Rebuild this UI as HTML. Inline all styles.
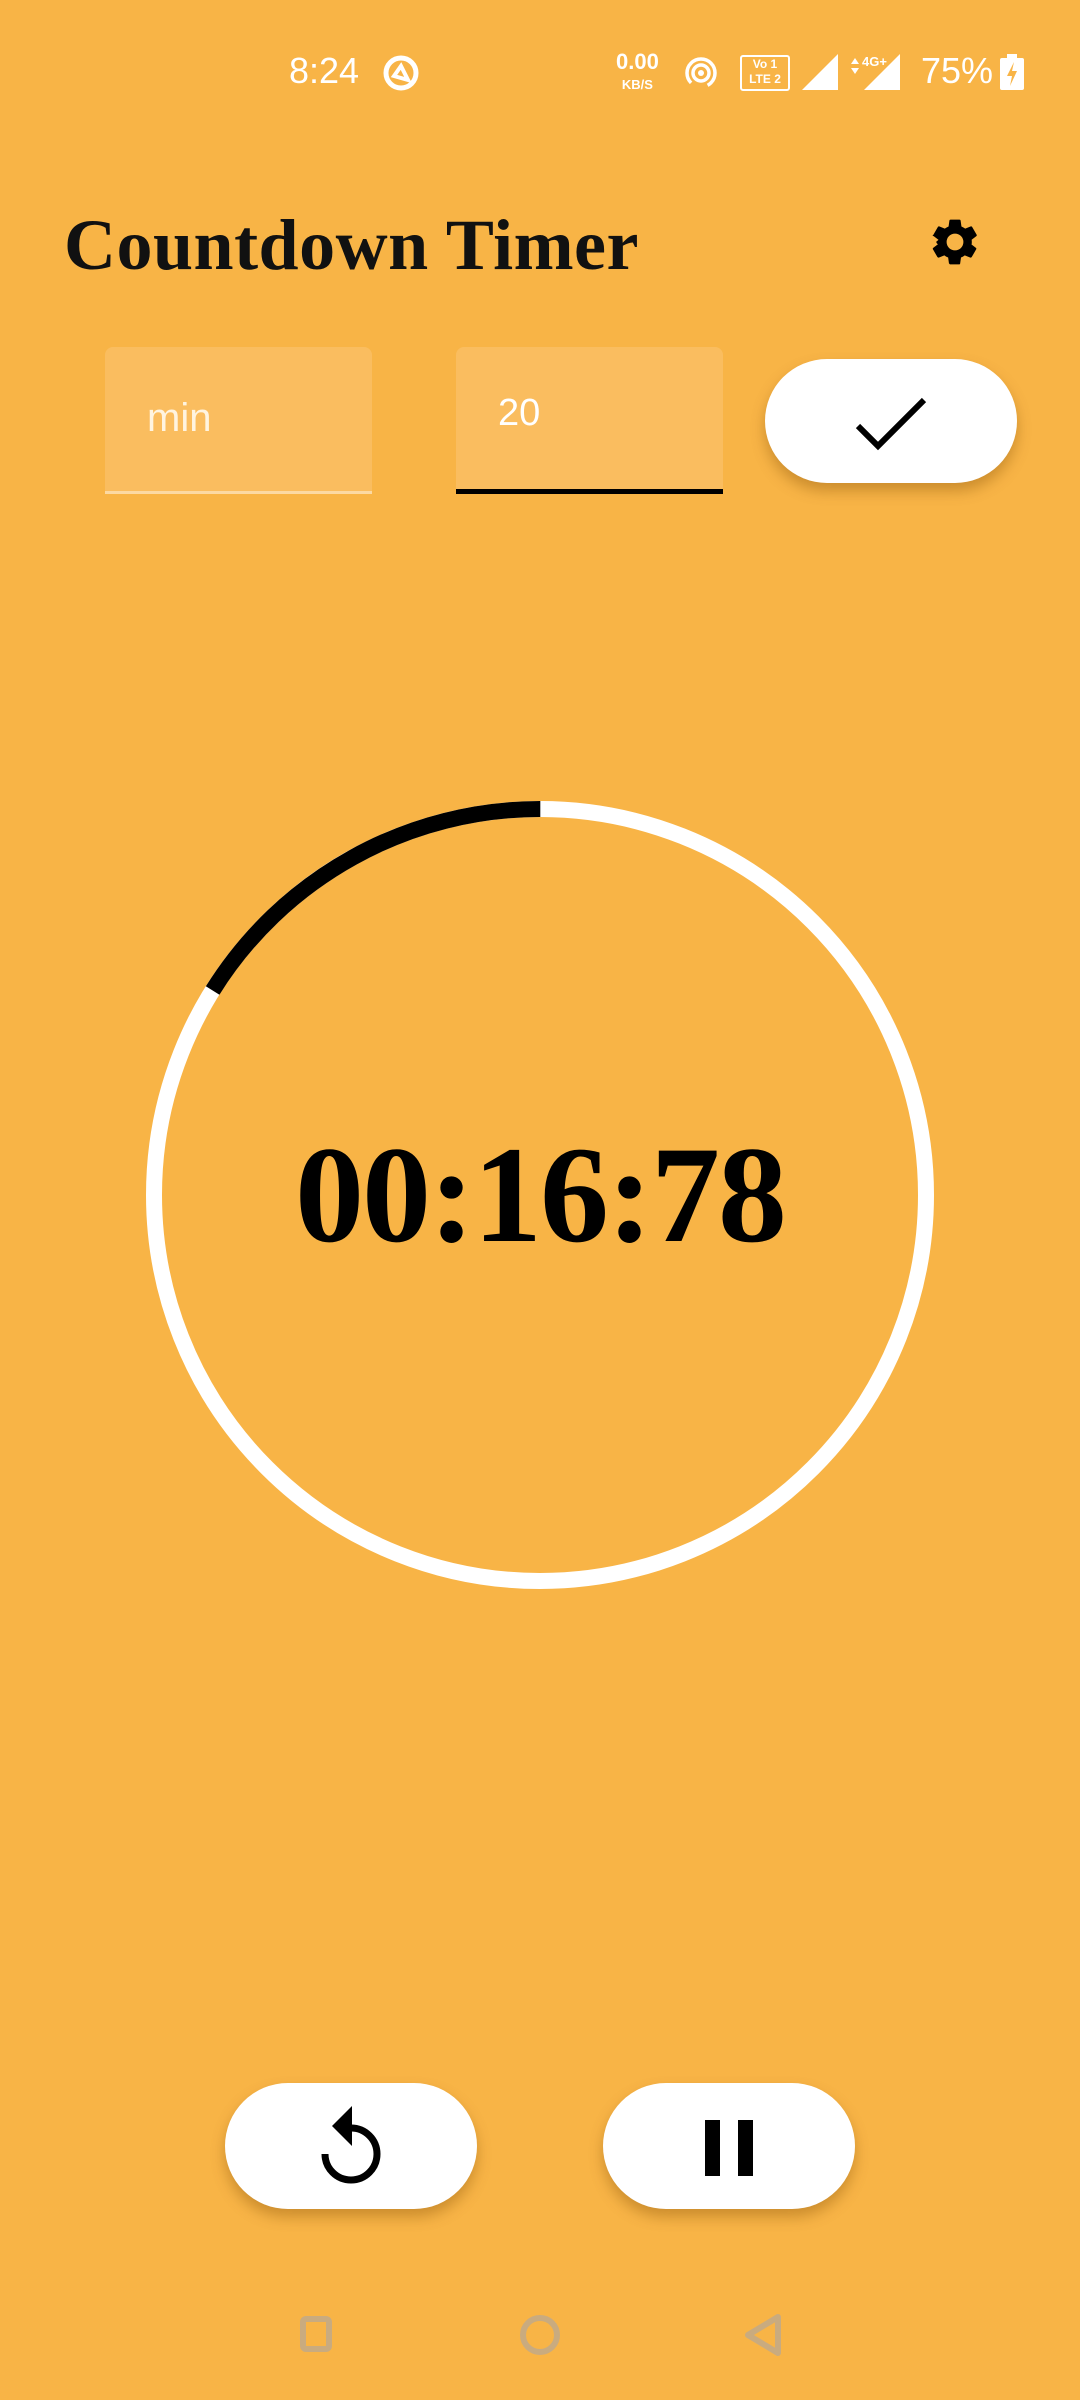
<!DOCTYPE html>
<html><head><meta charset="utf-8"><style>
html,body{margin:0;padding:0}
body{width:1080px;height:2400px;background:#F8B446;position:relative;overflow:hidden;font-family:"Liberation Sans",sans-serif}
.abs{position:absolute}
.st{color:#fff;font-size:36px}
.title{left:64px;top:200px;font-family:"Liberation Serif",serif;font-weight:bold;font-size:72px;color:#111;line-height:90px;letter-spacing:0.5px}
.field{background:#FABD5F;border-radius:8px 8px 0 0;top:347px;height:147px;width:267px}
.pill{background:#fff;border-radius:64px;box-shadow:0 8px 14px rgba(120,70,0,0.35)}
</style></head><body>
<div class="abs st" style="left:289px;top:50px">8:24</div>
<svg class="abs" style="left:382px;top:54px" width="38" height="38" viewBox="0 0 38 38"><circle cx="19" cy="19" r="15" fill="none" stroke="#fff" stroke-width="5"/><path d="M12 22 L19 12 L26 26 Z" fill="none" stroke="#fff" stroke-width="4"/></svg>
<div class="abs" style="left:616px;top:52px;color:#fff;font-weight:bold;font-size:22px;line-height:20px;text-align:center">0.00<br><span style="font-size:13px">KB/S</span></div>
<svg class="abs" style="left:684px;top:56px" width="34" height="34" viewBox="0 0 34 34"><circle cx="17" cy="17" r="14" fill="none" stroke="#fff" stroke-width="3.5" stroke-dasharray="70 18" transform="rotate(135 17 17)"/><circle cx="17" cy="17" r="8" fill="none" stroke="#fff" stroke-width="3.5"/><circle cx="17" cy="17" r="3" fill="#fff"/></svg>
<div class="abs" style="left:740px;top:55px;width:46px;height:32px;border:2px solid #fff;border-radius:3px;color:#fff;font-size:12px;font-weight:bold;line-height:15px;text-align:center">Vo 1<br>LTE 2</div>
<svg class="abs" style="left:802px;top:54px" width="36" height="36"><path d="M0 36 L36 0 L36 36 Z" fill="#fff"/></svg>
<svg class="abs" style="left:848px;top:52px" width="52" height="38"><path d="M3 12 L7 6 L11 12 Z M3 16 L7 22 L11 16 Z" fill="#fff"/><path d="M16 38 L52 2 L52 38 Z" fill="#fff"/><text x="14" y="14" fill="#fff" font-size="13" font-weight="bold" font-family="Liberation Sans">4G+</text></svg>
<div class="abs st" style="left:921px;top:50px">75%</div>
<svg class="abs" style="left:1000px;top:54px" width="26" height="36"><rect x="0" y="4" width="24" height="32" rx="2" fill="#fff"/><rect x="7" y="0" width="10" height="5" fill="#fff"/><path d="M14 8 L7 22 L12 22 L10 32 L17 17 L12 17 Z" fill="#F8B446"/></svg>

<div class="abs title">Countdown Timer</div>
<svg class="abs" style="left:927px;top:214px" width="56" height="56" viewBox="0 0 24 24"><path fill="#000" d="M19.14 12.94c.04-.3.06-.61.06-.94 0-.32-.02-.64-.07-.94l2.03-1.58a.49.49 0 0 0 .12-.61l-1.92-3.32a.49.49 0 0 0-.59-.22l-2.39.96c-.5-.38-1.03-.7-1.62-.94l-.36-2.54a.48.48 0 0 0-.48-.41h-3.84c-.24 0-.43.17-.47.41l-.36 2.54c-.59.24-1.13.57-1.62.94l-2.39-.96a.48.48 0 0 0-.59.22L2.74 8.87c-.12.21-.8.47.12.61l2.03 1.58c-.05.3-.9.63-.9.94s.2.64.7.94l-2.03 1.58a.49.49 0 0 0-.12.61l1.92 3.32c.12.22.37.29.59.22l2.39-.96c.5.38 1.03.7 1.62.94l.36 2.54c.5.24.24.41.48.41h3.84c.24 0 .44-.17.47-.41l.36-2.54c.59-.24 1.13-.56 1.62-.94l2.39.96c.22.08.47 0 .59-.22l1.92-3.32c.12-.22.07-.47-.12-.61l-2.01-1.58zM12 15.6A3.6 3.6 0 1 1 12 8.4a3.6 3.6 0 0 1 0 7.2z"/></svg>

<div class="abs field" style="left:105px;border-bottom:3px solid #FCD9A2;height:144px"></div>
<div class="abs" style="left:147px;top:396px;color:#FFF4E0;font-size:40px">min</div>
<div class="abs field" style="left:456px;border-bottom:5px solid #000;height:142px"></div>
<div class="abs" style="left:498px;top:392px;color:#fff;font-size:38px">20</div>
<div class="abs pill" style="left:765px;top:359px;width:252px;height:124px"></div>
<svg class="abs" style="left:852px;top:392px" width="80" height="64"><path d="M6 34 L26 54 L72 8" fill="none" stroke="#000" stroke-width="6"/></svg>

<svg class="abs" style="left:0;top:0" width="1080" height="2400">
<circle cx="540" cy="1195" r="386" fill="none" stroke="#fff" stroke-width="16"/>
<circle cx="540" cy="1195" r="386" fill="none" stroke="#000" stroke-width="16" stroke-dasharray="391 3000" transform="rotate(-148 540 1195)"/>
</svg>
<div class="abs" style="left:0;width:1080px;top:1110px;text-align:center;font-family:'Liberation Serif',serif;font-weight:bold;font-size:138px;line-height:170px;color:#000;letter-spacing:-2px">00:16:78</div>

<div class="abs pill" style="left:225px;top:2083px;width:252px;height:126px"></div>
<svg class="abs" style="left:311px;top:2100px" width="80" height="92" viewBox="0 0 80 92"><path d="M40 28 A26 26 0 1 1 14 54" fill="none" stroke="#000" stroke-width="7"/><path d="M41 6 L41 46 L21 26 Z" fill="#000"/></svg>
<div class="abs pill" style="left:603px;top:2083px;width:252px;height:126px"></div>
<div class="abs" style="left:705px;top:2120px;width:15px;height:56px;background:#000"></div>
<div class="abs" style="left:738px;top:2120px;width:15px;height:56px;background:#000"></div>

<div class="abs" style="left:300px;top:2316px;width:32px;height:36px;border:6px solid #C9AB7F;border-radius:6px;box-sizing:border-box"></div>
<div class="abs" style="left:520px;top:2315px;width:40px;height:40px;border:6px solid #C9AB7F;border-radius:50%;box-sizing:border-box"></div>
<svg class="abs" style="left:740px;top:2313px" width="44" height="44"><path d="M38 4 L38 40 L8 22 Z" fill="none" stroke="#C9AB7F" stroke-width="6" stroke-linejoin="round"/></svg>
</body></html>
